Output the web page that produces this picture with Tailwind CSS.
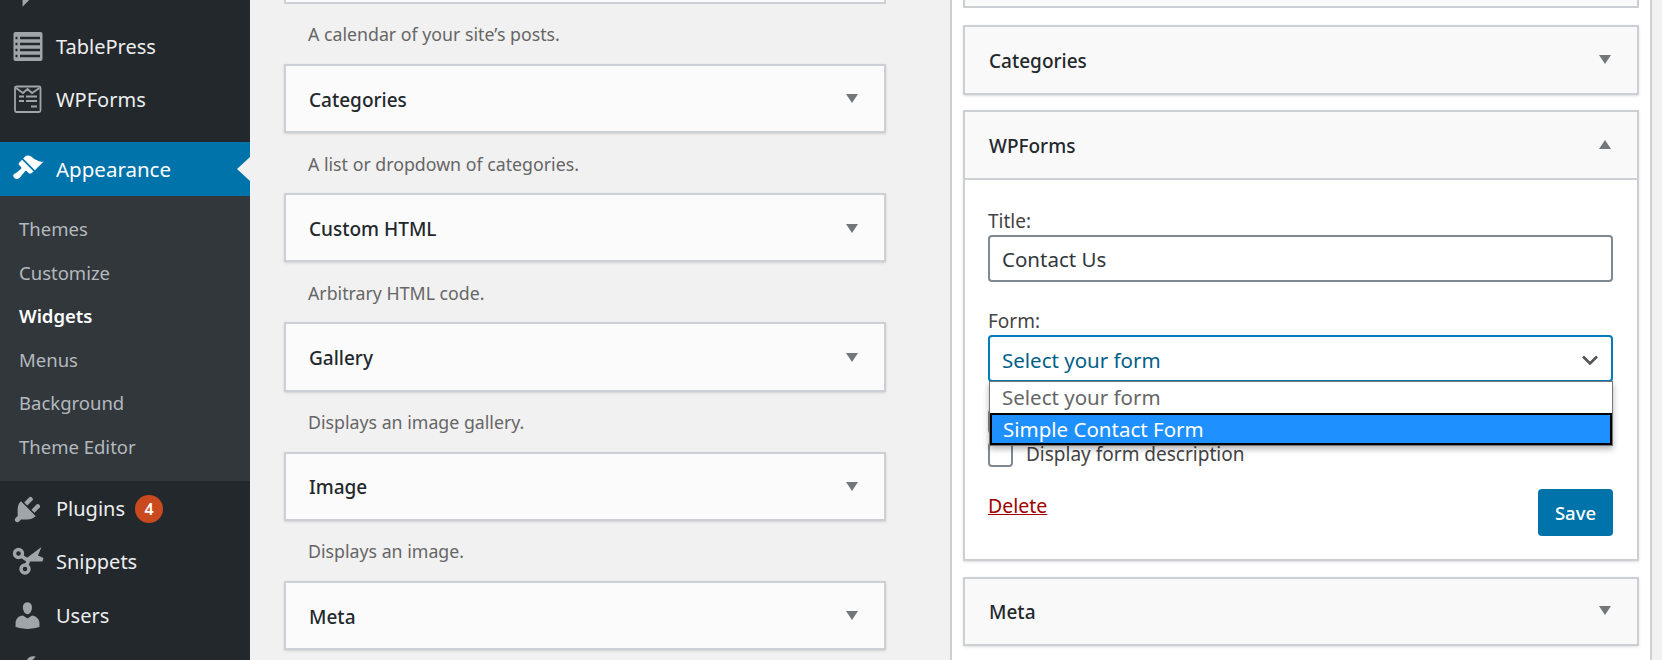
<!DOCTYPE html>
<html lang="en">
<head>
    <meta charset="UTF-8">
    <meta name="viewport" content="width=device-width, initial-scale=1.0">
    <title>Widgets</title>
    <script src="https://cdn.jsdelivr.net/npm/@tailwindcss/browser@4"></script>
</head>
<body class="bg-[#f1f1f1] font-['Noto_Sans','Open_Sans',sans-serif]">
<div class="flex h-[660px] w-[1662px] overflow-hidden bg-[#f1f1f1]">

    <!-- Admin sidebar -->
    <aside class="relative w-[250px] shrink-0 bg-[#23282d] text-[20px] text-[#eeeeee]">
        <div class="mt-[-33.4px]">
            <div class="flex h-[53.3px] items-center">
                <svg class="ml-[11px] h-[33px] w-[33px] fill-[#a0a5aa]" viewBox="0 0 20 20"><path d="M5 2h9c1.1 0 2 .9 2 2v7c0 1.1-.9 2-2 2h-2l-5 5v-5H5c-1.1 0-2-.9-2-2V4c0-1.1.9-2 2-2z"/></svg>
                <span class="ml-[12px]">Comments</span>
            </div>
            <div class="flex h-[53.3px] items-center">
                <svg class="ml-[11px] h-[33px] w-[33px]" viewBox="0 0 33 33">
                    <rect x="2.5" y="2" width="29" height="29" rx="2" fill="#a0a5aa"/>
                    <path d="M9 8h20M9 14h20M9 20h20M9 26h20" stroke="#23282d" stroke-width="2.4"/>
                    <path d="M4.5 8h2M4.5 14h2M4.5 20h2M4.5 26h2" stroke="#23282d" stroke-width="2.4"/>
                </svg>
                <span class="ml-[12px]">TablePress</span>
            </div>
            <div class="flex h-[53.3px] items-center">
                <svg class="ml-[11px] h-[33px] w-[33px]" viewBox="0 0 33 33" fill="none" stroke="#a0a5aa">
                    <rect x="4" y="3.5" width="25.5" height="25.5" rx="1.5" stroke-width="1.8"/>
                    <path d="M5 5l7 5 4.5-4 4.5 4 7.5-5" stroke-width="1.8"/>
                    <path d="M8 13.5h5M15 13.5h11M8 18h5M15 18h11M20 23.5h6" stroke-width="1.8"/>
                </svg>
                <span class="ml-[12px]">WPForms</span>
            </div>
        </div>

        <div class="mt-[15.5px] flex h-[53.5px] items-center bg-[#0073aa] text-[20.5px] text-white">
            <svg class="ml-[11px] h-[33px] w-[33px] fill-white" viewBox="0 0 20 20"><path d="M14.48 11.06L7.41 3.99l1.5-1.5c.5-.56 2.3-.47 3.51.32 1.21.8 1.43 1.28 2.91 2.1 1.18.64 2.45 1.26 4.45.85zm-.71.71L6.7 4.7 4.93 6.47c-.39.39-.39 1.02 0 1.41l1.06 1.06c.39.39.39 1.03 0 1.42-.6.6-1.43 1.11-2.21 1.69-.35.26-.7.53-1.01.84C1.43 13.23.78 14.45 2 15.66c.02.02.03.03.05.04.01.01.02.03.03.04 1.2 1.2 2.43.55 3.75-.76.31-.31.58-.66.84-1.01.58-.78 1.09-1.61 1.69-2.21.39-.39 1.02-.39 1.41 0l1.06 1.06c.39.39 1.02.39 1.41 0z"/></svg>
            <span class="ml-[12px] pt-[1px]">Appearance</span>
        </div>
        <!-- current menu arrow -->
        <div class="absolute right-0 top-[156.5px] h-0 w-0 border-y-[12.5px] border-r-[13px] border-y-transparent border-r-[#f1f1f1]"></div>

        <ul class="h-[285px] bg-[#32373c] pb-[12.5px] pl-[19px] pt-[11.5px] text-[18.5px] text-[#b4b9be]">
            <li class="flex h-[43.6px] items-center">Themes</li>
            <li class="flex h-[43.6px] items-center">Customize</li>
            <li class="flex h-[43.6px] items-center font-semibold text-white">Widgets</li>
            <li class="flex h-[43.6px] items-center">Menus</li>
            <li class="flex h-[43.6px] items-center">Background</li>
            <li class="flex h-[43.6px] items-center">Theme Editor</li>
        </ul>

        <div class="mt-[2px]">
            <div class="flex h-[53.3px] items-center">
                <svg class="ml-[11px] h-[33px] w-[33px] fill-[#a0a5aa]" viewBox="0 0 20 20"><path d="M13.11 4.36L9.87 7.6 8 5.73l3.24-3.24c.35-.34 1.05-.2 1.56.32.52.51.66 1.21.31 1.55zm-8 1.77l.91-1.12 9.01 9.01-1.19.84c-.71.71-2.63 1.16-3.82 1.16H6.14L4.9 17.26c-.59.59-1.54.59-2.12 0-.59-.58-.59-1.53 0-2.12l1.24-1.24v-3.88c0-1.13.4-3.19 1.09-3.89zm7.26 3.97l3.24-3.24c.34-.35 1.04-.21 1.55.31.52.51.66 1.21.31 1.55l-3.24 3.25z"/></svg>
                <span class="ml-[12px]">Plugins</span>
                <span class="ml-[10px] flex h-[28px] w-[28px] items-center justify-center rounded-full bg-[#ca4a1f] text-[16px] font-semibold text-white">4</span>
            </div>
            <div class="flex h-[53.3px] items-center">
                <svg class="ml-[11px] h-[33px] w-[33px]" viewBox="0 0 33 33" fill="none" stroke="#a0a5aa">
                    <circle cx="7.5" cy="7.5" r="4" stroke-width="3.4"/>
                    <circle cx="14" cy="23" r="4" stroke-width="3.4"/>
                    <path d="M11 10.5l6 4M15.5 19l2-4" stroke-width="3.8"/>
                    <path d="M15 12.5L30.5 1l-3.5 8.5 5.5 2.5-1 3.5H19l-3 1z" fill="#a0a5aa" stroke="none"/>
                </svg>
                <span class="ml-[12px]">Snippets</span>
            </div>
            <div class="flex h-[53.3px] items-center">
                <svg class="ml-[11px] h-[33px] w-[33px] fill-[#a0a5aa]" viewBox="0 0 20 20"><path d="M10 9.25c-2.27 0-2.73-3.44-2.73-3.44C7 4.02 7.82 2 9.97 2c2.16 0 2.98 2.02 2.71 3.81 0 0-.41 3.44-2.68 3.44zm0 2.57L12.72 10c2.39 0 4.52 2.33 4.52 4.53v2.49s-3.65 1.13-7.24 1.13c-3.65 0-7.24-1.13-7.24-1.13v-2.49c0-2.25 1.94-4.48 4.47-4.48z"/></svg>
                <span class="ml-[12px]">Users</span>
            </div>
            <div class="flex h-[53.3px] items-center">
                <svg class="ml-[11px] h-[33px] w-[33px] fill-[#a0a5aa]" viewBox="0 0 20 20"><path d="M16.68 9.77c-1.34 1.34-3.3 1.67-4.95.99l-5.41 6.52c-.99.99-2.59.99-3.58 0s-.99-2.59 0-3.57l6.52-5.42c-.68-1.65-.35-3.61.99-4.95 1.28-1.28 3.12-1.62 4.72-1.06l-2.89 2.89 2.82 2.82 2.86-2.87c.53 1.58.18 3.39-1.08 4.67z"/></svg>
                <span class="ml-[12px]">Tools</span>
            </div>
        </div>
    </aside>

    <!-- Available widgets -->
    <main class="ml-[34px] mt-[-65.5px] w-[602px] shrink-0 text-[17.75px] text-[#666666]">
        <div class="h-[69.25px] border-2 border-[#ccd0d4] bg-[#fbfbfb]"></div>
        <p class="flex h-[60px] items-center pl-[24px] pt-[2px]">A calendar of your site’s posts.</p>

        <div class="flex h-[69.25px] items-center justify-between border-2 border-[#ccd0d4] bg-[#fbfbfb] pl-[23px] pr-[26px] shadow-sm">
            <h3 class="pt-[3px] text-[19px] font-medium text-[#23282d]">Categories</h3>
            <svg class="mt-[1px] h-[9px] w-[12px] fill-[#72777c]" viewBox="0 0 12 9"><path d="M0 0h12L6 9z"/></svg>
        </div>
        <p class="flex h-[60px] items-center pl-[24px] pt-[2px]">A list or dropdown of categories.</p>

        <div class="flex h-[69.25px] items-center justify-between border-2 border-[#ccd0d4] bg-[#fbfbfb] pl-[23px] pr-[26px] shadow-sm">
            <h3 class="pt-[3px] text-[19px] font-medium text-[#23282d]">Custom HTML</h3>
            <svg class="mt-[1px] h-[9px] w-[12px] fill-[#72777c]" viewBox="0 0 12 9"><path d="M0 0h12L6 9z"/></svg>
        </div>
        <p class="flex h-[60px] items-center pl-[24px] pt-[2px]">Arbitrary HTML code.</p>

        <div class="flex h-[69.25px] items-center justify-between border-2 border-[#ccd0d4] bg-[#fbfbfb] pl-[23px] pr-[26px] shadow-sm">
            <h3 class="pt-[3px] text-[19px] font-medium text-[#23282d]">Gallery</h3>
            <svg class="mt-[1px] h-[9px] w-[12px] fill-[#72777c]" viewBox="0 0 12 9"><path d="M0 0h12L6 9z"/></svg>
        </div>
        <p class="flex h-[60px] items-center pl-[24px] pt-[2px]">Displays an image gallery.</p>

        <div class="flex h-[69.25px] items-center justify-between border-2 border-[#ccd0d4] bg-[#fbfbfb] pl-[23px] pr-[26px] shadow-sm">
            <h3 class="pt-[3px] text-[19px] font-medium text-[#23282d]">Image</h3>
            <svg class="mt-[1px] h-[9px] w-[12px] fill-[#72777c]" viewBox="0 0 12 9"><path d="M0 0h12L6 9z"/></svg>
        </div>
        <p class="flex h-[60px] items-center pl-[24px] pt-[2px]">Displays an image.</p>

        <div class="flex h-[69.25px] items-center justify-between border-2 border-[#ccd0d4] bg-[#fbfbfb] pl-[23px] pr-[26px] shadow-sm">
            <h3 class="pt-[3px] text-[19px] font-medium text-[#23282d]">Meta</h3>
            <svg class="mt-[1px] h-[9px] w-[12px] fill-[#72777c]" viewBox="0 0 12 9"><path d="M0 0h12L6 9z"/></svg>
        </div>
    </main>

    <!-- Sidebar widget area -->
    <section class="ml-[64px] w-[702px] shrink-0 border-x-2 border-[#ccd0d4] bg-white px-[11px] text-[19px] text-[#444444]">
        <div class="mt-[-62px] h-[70px] border-2 border-[#ccd0d4] bg-[#f9f9f9]"></div>

        <div class="mt-[17px] flex h-[70px] items-center justify-between border-2 border-[#ccd0d4] bg-[#f9f9f9] pl-[24px] pr-[26px] shadow-sm">
            <h3 class="pt-[3px] text-[19px] font-medium text-[#23282d]">Categories</h3>
            <svg class="mb-[1px] h-[9px] w-[12px] fill-[#72777c]" viewBox="0 0 12 9"><path d="M0 0h12L6 9z"/></svg>
        </div>

        <div class="mt-[15px] h-[450.5px] border-2 border-[#ccd0d4] shadow-sm">
            <div class="flex h-[68px] items-center justify-between border-b-2 border-[#ccd0d4] bg-[#f9f9f9] pl-[24px] pr-[26px]">
                <h3 class="pt-[3px] text-[19px] font-medium text-[#23282d]">WPForms</h3>
                <svg class="mb-[1px] h-[9px] w-[12px] fill-[#72777c]" viewBox="0 0 12 9"><path d="M0 9h12L6 0z"/></svg>
            </div>
            <div class="pl-[23px] pr-[24px] pt-[28px]">
                <label class="block h-[27px] leading-[27px]">Title:</label>
                <input class="block h-[47px] w-full rounded-[4px] border-2 border-[#7e8993] px-[12px] text-[20.5px] text-[#32373c] outline-none" value="Contact Us">

                <label class="mt-[27px] block h-[26px] leading-[25px]">Form:</label>
                <div class="relative">
                    <div class="flex h-[47px] items-center justify-between rounded-[4px] border-2 border-[#007cba] pl-[12px] pr-[13px] pt-[3px] text-[20.5px] text-[#016087]">
                        <span>Select your form</span>
                        <svg class="h-[10px] w-[16px]" viewBox="0 0 16 10" fill="none" stroke="#555555" stroke-width="2.6"><path d="M1 1.5l7 7 7-7"/></svg>
                    </div>
                    <ul class="absolute left-[1px] right-0 top-[46px] z-10 border border-[#767676] bg-white text-[20.5px] shadow-[0_3px_6px_rgba(0,0,0,0.3)]">
                        <li class="flex h-[31px] items-center pl-[12px] text-[#666666]">Select your form</li>
                        <li class="flex h-[32px] items-center border-2 border-black bg-[#1e90ff] pl-[11px] text-white">Simple Contact Form</li>
                    </ul>
                </div>

                <label class="mt-[27px] flex h-[25px] items-center">
                    <span class="h-[25px] w-[25px] rounded-[4px] border-2 border-[#7e8993]"></span>
                    <span class="ml-[13px]">Display form title</span>
                </label>
                <label class="mt-[8px] flex h-[25px] items-center">
                    <span class="h-[25px] w-[25px] rounded-[4px] border-2 border-[#7e8993]"></span>
                    <span class="ml-[13px]">Display form description</span>
                </label>

                <div class="mt-[22px] flex items-start justify-between">
                    <a class="mt-[2px] text-[19.5px] text-[#a00000] underline" href="#">Delete</a>
                    <button class="h-[47px] w-[75px] rounded-[4px] bg-[#0073aa] text-[18.5px] font-medium text-white">Save</button>
                </div>
            </div>
        </div>

        <div class="mt-[16px] flex h-[69px] items-center justify-between border-2 border-[#ccd0d4] bg-[#f9f9f9] pl-[24px] pr-[26px] shadow-sm">
            <h3 class="pt-[3px] text-[19px] font-medium text-[#23282d]">Meta</h3>
            <svg class="mb-[1px] h-[9px] w-[12px] fill-[#72777c]" viewBox="0 0 12 9"><path d="M0 0h12L6 9z"/></svg>
        </div>
    </section>
</div>
</body>
</html>
